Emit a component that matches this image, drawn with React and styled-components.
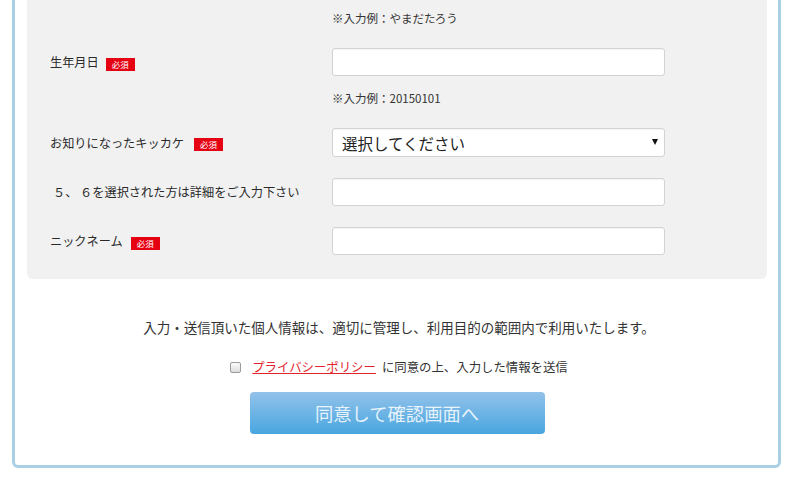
import React from "react";
import styled, { createGlobalStyle } from "styled-components";

const Global = createGlobalStyle`
  html, body { margin: 0; padding: 0; background: #fff; overflow: hidden; }
  body { font-family: "Noto Sans CJK JP", "Noto Sans", sans-serif; color: #333; }
`;

const Frame = styled.div`
  box-sizing: border-box;
  width: 769px;
  margin: -40px 0 0 12px;
  border: 3px solid #a9cfe5;
  border-radius: 6px;
  padding: 12px 11px 31px 12px;
`;

const Panel = styled.div`
  background: #f1f1f1;
  border-radius: 6px;
  padding: 34px 0 24px 23px;
  display: flex;
  flex-direction: column;
  gap: 21px;
`;

const Field = styled.div`
  display: grid;
  grid-template-columns: 282px 333px;
  align-items: center;
`;

const Label = styled.div`
  font-size: 12.2px;
  line-height: 18px;
  color: #2a2a2a;
  display: flex;
  align-items: center;
  padding-left: ${(p) => p.$indent || 0}px;
`;

const Badge = styled.span`
  display: inline-flex;
  align-items: center;
  justify-content: center;
  width: 29px;
  height: 13px;
  margin-left: ${(p) => p.$gap || 7}px;
  margin-top: 4px;
  background: #e50012;
  color: #fff;
  font-size: 8.5px;
  line-height: 1;
`;

const Hint = styled.div`
  grid-column: 2;
  font-size: 11.5px;
  line-height: 18px;
  color: #333;
  margin-top: ${(p) => (p.$first ? 0 : 13)}px;
`;

const Input = styled.div`
  grid-column: 2;
  box-sizing: border-box;
  height: 28px;
  background: #fff;
  border: 1px solid #d3d3d3;
  border-radius: 3px;
  box-shadow: inset 0 1px 1px rgba(0, 0, 0, 0.04);
`;

const Select = styled(Input)`
  height: 29px;
  display: flex;
  align-items: center;
  justify-content: space-between;
  padding: 0 6px 0 9px;
  font-size: 15.5px;
  color: #222;
`;

const Arrow = styled.span`
  width: 0;
  height: 0;
  border-left: 3.5px solid transparent;
  border-right: 3.5px solid transparent;
  border-top: 6px solid #111;
  margin-top: -2px;
`;

const Footer = styled.div`
  display: flex;
  flex-direction: column;
  align-items: center;
  padding-top: 38px;
`;

const Notice = styled.p`
  margin: 0 0 0 4px;
  font-size: 13.5px;
  line-height: 20px;
  color: #333;
`;

const AgreeRow = styled.div`
  display: flex;
  align-items: center;
  margin-top: 20px;
  margin-left: 4px;
  font-size: 12.4px;
  line-height: 20px;
  color: #333;
`;

const Check = styled.span`
  box-sizing: border-box;
  width: 11px;
  height: 11px;
  border: 1px solid #9a9a9a;
  border-radius: 2px;
  background: linear-gradient(#fdfdfd, #dcdcdc);
  margin-right: 11px;
`;

const Link = styled.a`
  color: #e2232d;
  text-decoration: underline;
  margin-right: 6px;
`;

const Button = styled.button`
  margin-top: 15px;
  width: 295px;
  height: 42px;
  border: none;
  border-radius: 4px;
  background: linear-gradient(#93c2ea, #48a6e0);
  color: rgba(255, 255, 255, 0.85);
  font-family: "Noto Sans CJK JP", sans-serif;
  font-size: 18.3px;
  cursor: pointer;
`;

export default function App() {
  return (
    <>
      <Global />
      <Frame>
        <Panel>
          <Field>
            <Hint $first>※入力例：やまだたろう</Hint>
          </Field>
          <Field>
            <Label>
              生年月日<Badge>必須</Badge>
            </Label>
            <Input />
            <Hint>※入力例：20150101</Hint>
          </Field>
          <Field>
            <Label>
              お知りになったキッカケ<Badge $gap={10}>必須</Badge>
            </Label>
            <Select>
              選択してください
              <Arrow />
            </Select>
          </Field>
          <Field>
            <Label $indent={3}>５、 ６を選択された方は詳細をご入力下さい</Label>
            <Input />
          </Field>
          <Field>
            <Label>
              ニックネーム<Badge $gap={8}>必須</Badge>
            </Label>
            <Input />
          </Field>
        </Panel>
        <Footer>
          <Notice>入力・送信頂いた個人情報は、適切に管理し、利用目的の範囲内で利用いたします。</Notice>
          <AgreeRow>
            <Check />
            <Link>プライバシーポリシー</Link>
            に同意の上、入力した情報を送信
          </AgreeRow>
          <Button>同意して確認画面へ</Button>
        </Footer>
      </Frame>
    </>
  );
}
